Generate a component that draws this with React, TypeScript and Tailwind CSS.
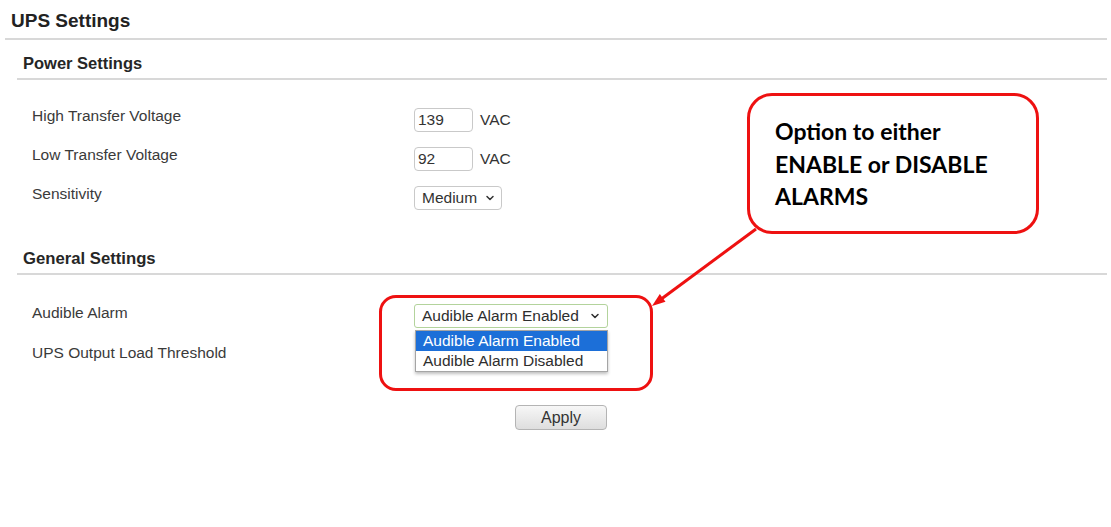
import { ChevronDown } from "lucide-react";
import type { ReactNode } from "react";

type RowProps = {
  label: string;
  children?: ReactNode;
  tall?: boolean;
};

const FormRow = ({ label, children, tall }: RowProps) => (
  <div className={tall ? "flex items-center h-[40px]" : "flex items-center h-[39px]"}>
    <div className="w-[382px] pb-[8px] text-[15.5px] leading-[17px] text-[#3a3a3a]">
      {label}
    </div>
    <div className="flex items-center">{children}</div>
  </div>
);

export default function App() {
  return (
    <div className="relative w-[1111px] h-[527px] overflow-hidden bg-white font-['Liberation_Sans',Arial,sans-serif] text-[#333]">
      <div className="h-[38px] pl-[11px] pt-[10px] text-[19px] leading-[22px] font-bold text-[#222]">
        UPS Settings
      </div>
      <div className="ml-[5px] w-[1102px] h-[2px] bg-[#d8d8d8]" />

      <div className="ml-[17px] w-[1090px]">
        <div className="h-[38px] pt-[13px]">
          <div className="pl-[6px] text-[16.5px] leading-[20px] font-bold text-[#262626]">
            Power Settings
          </div>
        </div>
        <div className="h-[2px] bg-[#d8d8d8]" />

        <div className="pt-[20px] pl-[15px]">
          <FormRow label="High Transfer Voltage">
            <div className="w-[59px] h-[24px] border border-[#c9c9c9] rounded-[4px] pl-[3px] text-[15.5px] leading-[22px]">
              139
            </div>
            <span className="ml-[7px] text-[15.5px]">VAC</span>
          </FormRow>
          <FormRow label="Low Transfer Voltage">
            <div className="w-[59px] h-[24px] border border-[#c9c9c9] rounded-[4px] pl-[3px] text-[15.5px] leading-[22px]">
              92
            </div>
            <span className="ml-[7px] text-[15.5px]">VAC</span>
          </FormRow>
          <FormRow label="Sensitivity">
            <div className="flex items-center justify-between w-[88px] h-[24px] border border-[#c9c9c9] rounded-[4px] pl-[7px] pr-[5px] text-[15.5px]">
              <span>Medium</span>
              <ChevronDown size={12} strokeWidth={3} />
            </div>
          </FormRow>
        </div>

        <div className="h-[56px] pt-[32px]">
          <div className="pl-[6px] text-[16.7px] leading-[20px] font-bold text-[#262626]">
            General Settings
          </div>
        </div>
        <div className="h-[2px] bg-[#d8d8d8]" />

        <div className="pt-[21px] pl-[15px]">
          <FormRow label="Audible Alarm" tall>
            <div className="flex items-center justify-between w-[194px] h-[24px] border border-[#b3d39c] rounded-[3px] pl-[7px] pr-[6px] text-[15.5px] text-[#2e2e2e]">
              <span>Audible Alarm Enabled</span>
              <ChevronDown size={12} strokeWidth={3} />
            </div>
          </FormRow>
          <FormRow label="UPS Output Load Threshold" tall />
        </div>

        <div className="mt-[29px] ml-[498px]">
          <button className="w-[92px] h-[25px] border border-[#b4b4b4] rounded-[4px] bg-gradient-to-b from-[#f7f7f7] to-[#dedede] text-[16px] leading-[22px] text-[#333]">
            Apply
          </button>
        </div>
      </div>

      {/* open dropdown list */}
      <div className="absolute left-[415px] top-[330px] w-[193px] border border-[#a5a5a5] bg-white shadow-[0_2px_3px_rgba(0,0,0,0.25)] text-[15.5px] leading-[20px]">
        <div className="h-[20px] pl-[7px] bg-[#1c6fd8] text-white">Audible Alarm Enabled</div>
        <div className="h-[20px] pl-[7px] text-[#2e2e2e]">Audible Alarm Disabled</div>
      </div>

      {/* annotation */}
      <div className="absolute left-[379px] top-[295px] w-[274px] h-[96px] border-[3px] border-[#ee1111] rounded-[17px]" />

      <svg
        className="absolute left-[640px] top-[220px]"
        width="130"
        height="100"
        viewBox="0 0 130 100"
      >
        <line x1="116" y1="9" x2="22" y2="78.5" stroke="#ee1111" strokeWidth="3" />
        <polygon points="12,86 25.5,81.8 19.8,74" fill="#ee1111" />
      </svg>

      <div className="absolute left-[747px] top-[93px] w-[292px] h-[141px] border-[3px] border-[#ee1111] rounded-[25px] bg-white pl-[25px] pt-[19px] font-['Lato',sans-serif] font-bold text-[23px] leading-[32.5px] text-black">
        Option to either
        <br />
        ENABLE or DISABLE
        <br />
        ALARMS
      </div>
    </div>
  );
}
